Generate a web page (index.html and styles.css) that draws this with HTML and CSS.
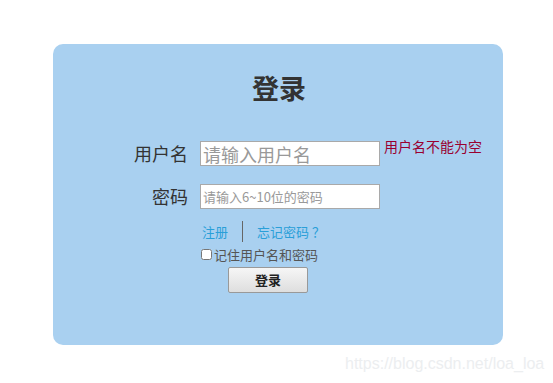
FILE: index.html
```html
<!DOCTYPE html>
<html lang="zh-CN">
<head>
  <meta charset="UTF-8">
  <title>登录</title>
  <link rel="stylesheet" href="styles.css">
</head>
<body>
  <div class='login'>
    <h1>登录</h1>
    <div class='row'>
      <label class='label big'>用户名</label>
      <input class='input big' type='text' placeholder='请输入用户名'>
      <span class='error'>用户名不能为空</span>
    </div>
    <div class='row second'>
      <label class='label big'>密码</label>
      <input class='input' type='password' placeholder='请输入6~10位的密码'>
    </div>
    <div class='links'>
      <a href='#'>注册</a>
      <span class='sep'></span>
      <a href='#'>忘记密码 ？</a>
    </div>
    <div class='remember'>
      <input type='checkbox'><span>记住用户名和密码</span>
    </div>
    <div class='submit'>
      <button>登录</button>
    </div>
  </div>
  <div class='mark'>https://blog.csdn.net/loa_loa</div>
</body>
</html>
```

FILE: styles.css
```css
* {
  margin: 0;
  padding: 0;
  box-sizing: border-box;
}
body {
  background-color: #fff;
  font-family: "Microsoft YaHei", "Noto Sans CJK SC", sans-serif;
  height: 383px;
  overflow: hidden;
}
.login {
  width: 450px;
  height: 301px;
  margin: 44px 0 0 53px;
  background-color: #a9d0f0;
  border-radius: 10px;
  padding-top: 24px;
}
h1 {
  text-align: center;
  font-size: 27px;
  font-weight: bold;
  color: #333;
  line-height: 40px;
  padding-left: 2px;
}
.row {
  display: flex;
  align-items: flex-start;
  margin-top: 33px;
  height: 25px;
}
.row.second {
  margin-top: 18px;
}
.label {
  width: 135px;
  margin-right: 12px;
  text-align: right;
  color: #333;
  line-height: 25px;
}
.big {
  font-size: 18px;
}
.input {
  width: 180px;
  height: 25px;
  border: 1px solid #a9a9a9;
  background: #fff;
  padding: 0 2px;
  font-family: inherit;
  font-size: 13px;
  outline: none;
}
.input.big {
  font-size: 18px;
}
.input::placeholder {
  color: #999;
}
.error {
  margin-left: 4px;
  font-size: 14px;
  line-height: 14px;
  margin-top: -2px;
  color: #9a0030;
}
.links {
  display: flex;
  align-items: center;
  padding-left: 149px;
  margin-top: 11px;
  height: 22px;
}
.links a {
  font-size: 13px;
  color: #2a9fd8;
  text-decoration: none;
}
.sep {
  width: 1px;
  height: 21px;
  background: #666;
  margin: 0 14px;
}
.remember {
  display: flex;
  align-items: center;
  padding-left: 148px;
  margin-top: 3px;
  font-size: 13px;
  color: #555;
  height: 18px;
}
.remember input {
  width: 11px;
  height: 11px;
  margin: 0 2px 0 0;
}
.submit {
  padding-left: 175px;
  margin-top: 3px;
}
.submit button {
  width: 80px;
  height: 26px;
  font-family: inherit;
  font-size: 13px;
  font-weight: bold;
  color: #222;
  border: 1px solid #999;
  border-radius: 2px;
  background: linear-gradient(#f6f6f6, #dedede);
}
.mark {
  position: absolute;
  left: 345px;
  top: 355px;
  font-family: "Liberation Sans", Arial, sans-serif;
  font-size: 16px;
  color: #eceef0;
}
```
